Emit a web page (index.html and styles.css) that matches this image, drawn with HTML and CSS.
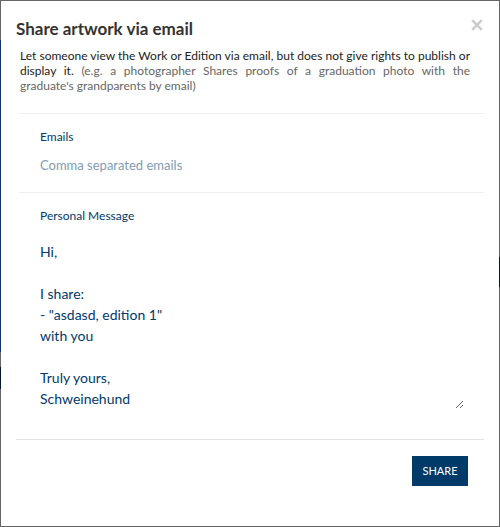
FILE: index.html
```
<!DOCTYPE html>
<html lang="en">
<head>
<meta charset="utf-8">
<meta name="viewport" content="width=device-width, initial-scale=1">
<title>Share artwork via email</title>
<link rel="stylesheet" href="styles.css">
</head>
<body>
<main class="modal" role="dialog" aria-labelledby="title">
  <header class="modal-header">
    <h1 class="modal-title" id="title">Share artwork via email</h1>
    <button class="close" type="button" aria-label="Close">
      <svg class="close-icon" viewBox="0 0 12 12" aria-hidden="true"><path d="M1.2 1.2 L10.8 10.8 M10.8 1.2 L1.2 10.8"/></svg>
    </button>
  </header>
  <p class="intro">Let someone view the Work or Edition via email, but does not give rights to publish or display it. <span class="example">(e.g. a photographer Shares proofs of a graduation photo with the graduate's grandparents by email)</span></p>
  <form class="form">
    <div class="field">
      <label class="label" for="emails">Emails</label>
      <input class="control" id="emails" type="text" placeholder="Comma separated emails">
    </div>
    <div class="field">
      <label class="label" for="message">Personal Message</label>
      <textarea class="control message" id="message" rows="8">Hi,

I share:
- "asdasd, edition 1"
with you

Truly yours,
Schweinehund</textarea>
    </div>
    <footer class="modal-footer">
      <button class="share" type="submit">SHARE</button>
    </footer>
  </form>
</main>
</body>
</html>
```
FILE: styles.css
```
* {
  box-sizing: border-box;
}

body {
  display: flex;
  min-height: 100vh;
  margin: 0;
  padding: 1px;
  font-family: Lato, "Liberation Sans", sans-serif;
  color: #003a69;
  /* dimmed page showing around the dialog */
  background:
    linear-gradient(#656567 40px, #12366a 40px 352px, #656567 352px 367px, #07182d 367px 389px, #656567 389px) left / 1px 100% no-repeat,
    linear-gradient(#656567 257px, #0a1929 257px 287px, #656567 287px) right / 1px 100% no-repeat,
    #656567;
}

.modal {
  flex: 1;
  padding: 15px;
  background: #fff;
}

.modal-header {
  display: flex;
  justify-content: space-between;
  align-items: flex-start;
}

.modal-title {
  margin: 0;
  font-size: 17px;
  line-height: 26px;
  font-weight: 700;
  color: #333;
}

.close {
  padding: 3px 1px;
  border: 0;
  background: none;
  cursor: pointer;
}

.close-icon {
  display: block;
  width: 12px;
  height: 12px;
  fill: none;
  stroke: #ccc;
  stroke-width: 2.6;
}

.intro {
  margin: 6px 14px 20px 4px;
  font-size: 12px;
  line-height: 15px;
  text-align: justify;
  color: #222;
}

.example {
  color: #666;
}

.field {
  margin-left: 3px;
  padding: 15px 20px 16px 21px;
  border-top: 1px solid #f0f0f0;
}

.label {
  display: block;
  font-size: 12px;
  line-height: 16px;
}

.control {
  display: block;
  width: 100%;
  margin-top: 10px;
  padding: 0;
  border: 0;
  outline: 0;
  background: transparent;
  font: 13px/21px Lato, "Liberation Sans", sans-serif;
  color: inherit;
}

.control::placeholder {
  color: #7f9cb4;
  opacity: 1;
}

.message {
  margin-top: 17px;
  font-size: 14px;
  resize: vertical;
}

.modal-footer {
  display: flex;
  justify-content: flex-end;
  margin-top: 14px;
  padding: 16px;
  border-top: 1px solid #e5e5e5;
}

.share {
  width: 56px;
  height: 30px;
  padding: 0;
  border: 0;
  background: #003a69;
  color: #fff;
  font: 11px/30px Lato, "Liberation Sans", sans-serif;
  cursor: pointer;
}
```
